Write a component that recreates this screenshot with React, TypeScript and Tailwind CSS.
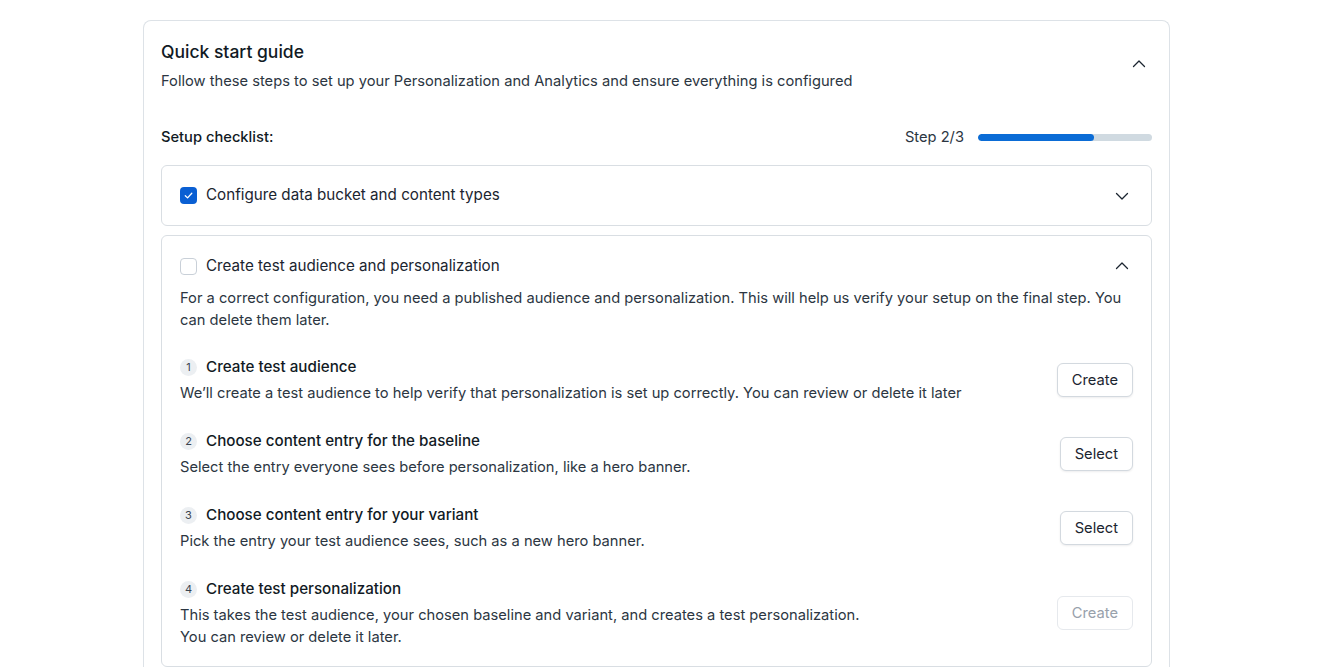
import { useState } from "react";

const steps = [
  {
    n: 1,
    title: "Create test audience",
    body: ["We’ll create a test audience to help verify that personalization is set up correctly. You can review or delete it later"],
    action: "Create",
    disabled: false,
  },
  {
    n: 2,
    title: "Choose content entry for the baseline",
    body: ["Select the entry everyone sees before personalization, like a hero banner."],
    action: "Select",
    disabled: false,
  },
  {
    n: 3,
    title: "Choose content entry for your variant",
    body: ["Pick the entry your test audience sees, such as a new hero banner."],
    action: "Select",
    disabled: false,
  },
  {
    n: 4,
    title: "Create test personalization",
    body: [
      "This takes the test audience, your chosen baseline and variant, and creates a test personalization.",
      "You can review or delete it later.",
    ],
    action: "Create",
    disabled: true,
  },
];

function Chevron({ up }: { up?: boolean }) {
  return (
    <svg width="16" height="16" viewBox="0 0 16 16" fill="none" className="text-[#1b2530]">
      <path
        d={up ? "M2.5 10.5 8 5l5.5 5.5" : "M2.5 5.5 8 11l5.5-5.5"}
        stroke="currentColor"
        strokeWidth="1.3"
        strokeLinecap="round"
        strokeLinejoin="round"
      />
    </svg>
  );
}

function Checkbox({ checked }: { checked?: boolean }) {
  if (checked) {
    return (
      <span className="flex h-[17px] w-[17px] items-center justify-center rounded-[4px] bg-[#0a5fd3]">
        <svg width="11" height="11" viewBox="0 0 12 12" fill="none">
          <path d="M2.5 6.2 5 8.6l4.6-5" stroke="white" strokeWidth="1.4" strokeLinecap="round" strokeLinejoin="round" />
        </svg>
      </span>
    );
  }
  return <span className="h-[17px] w-[17px] rounded-[4px] border border-[#c9d0d8] bg-white" />;
}

export default function App() {
  const [open, setOpen] = useState(true);

  return (
    <div className="min-h-[670px] bg-white pt-5 text-[#1b2530]" style={{ fontFamily: "Inter, 'Noto Sans', sans-serif" }}>
      <div className="ml-[143px] w-[1027px] rounded-t-lg border border-b-0 border-[#dde2e7] px-[17px] pt-[21px]">
        <div className="flex items-start justify-between">
          <div>
            <h2 className="text-[17.5px] leading-[20px] font-medium text-[#111a24]">Quick start guide</h2>
            <p className="mt-[9px] text-[14.7px] leading-[20px] text-[#2c3642]">
              Follow these steps to set up your Personalization and Analytics and ensure everything is configured
            </p>
          </div>
          <button onClick={() => setOpen(!open)} className="mt-[14px] mr-[5px]">
            <Chevron up={open} />
          </button>
        </div>

        <div className="mt-[36px] flex items-center justify-between">
          <span className="text-[14.7px] leading-[20px] font-medium text-[#111a24]">Setup checklist:</span>
          <div className="flex items-center gap-[14px]">
            <span className="text-[14.7px] leading-[20px] text-[#2c3642]">Step 2/3</span>
            <div className="h-[7px] w-[174px] overflow-hidden rounded-full bg-[#d0dae1]">
              <div className="h-full rounded-full bg-[#0b6cd6]" style={{ width: "66.6%" }} />
            </div>
          </div>
        </div>

        <div className="mt-[18px] flex h-[61px] items-center justify-between rounded-md border border-[#d9dee3] pr-[21px] pl-[18px]">
          <div className="flex items-center gap-[9px]">
            <Checkbox checked />
            <span className="text-[15.2px] text-[#1b2530]">Configure data bucket and content types</span>
          </div>
          <Chevron />
        </div>

        <div className="mt-[9px] rounded-md border border-[#d9dee3] pt-[20px] pr-[18px] pb-[18px] pl-[18px]">
          <div className="flex items-center justify-between pr-[3px]">
            <div className="flex items-center gap-[9px]">
              <Checkbox />
              <span className="text-[15.2px] leading-[20px] text-[#1b2530]">Create test audience and personalization</span>
            </div>
            <Chevron up />
          </div>
          <p className="mt-[11px] text-[14.7px] leading-[22px] text-[#2c3642]">
            For a correct configuration, you need a published audience and personalization. This will help us verify your setup on the final step. You can delete them later.
          </p>

          <div className="mt-[25px] flex flex-col gap-[26px]">
            {steps.map((s) => (
              <div key={s.n} className="flex items-center justify-between">
                <div>
                  <div className="flex items-center gap-[9px]">
                    <span className="flex h-[17px] w-[17px] items-center justify-center rounded-full bg-[#eceff2] text-[11px] text-[#3a4450]">
                      {s.n}
                    </span>
                    <span className="text-[15.2px] leading-[22px] font-medium text-[#111a24]">{s.title}</span>
                  </div>
                  <div className="mt-[4px]">
                    {s.body.map((line) => (
                      <p key={line} className="text-[14.7px] leading-[22px] text-[#2c3642]">
                        {line}
                      </p>
                    ))}
                  </div>
                </div>
                <button
                  disabled={s.disabled}
                  className={
                    "h-[34px] rounded-md border bg-white px-[14px] text-[14.7px] shadow-[0_1px_2px_rgba(20,30,40,0.08)] " +
                    (s.disabled ? "border-[#e6e9ed] text-[#98a1ab] shadow-none" : "border-[#d3d9df] text-[#1b2530]")
                  }
                >
                  {s.action}
                </button>
              </div>
            ))}
          </div>
        </div>
      </div>
    </div>
  );
}
